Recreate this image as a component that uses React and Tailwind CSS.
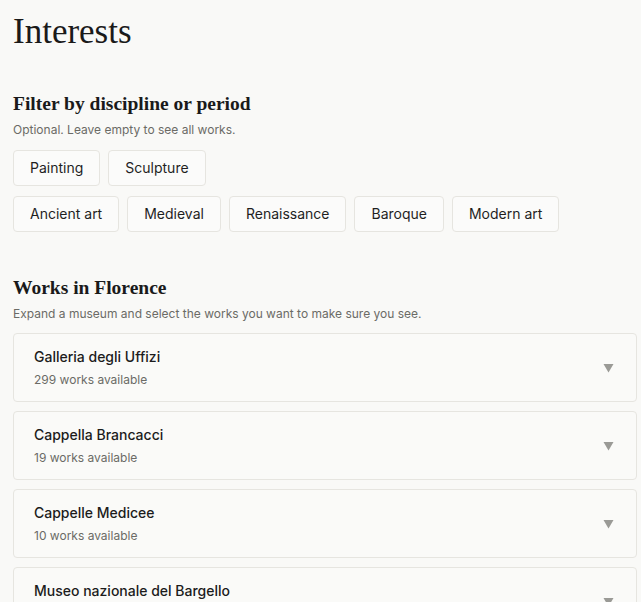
export default function App() {
  const row1 = ["Painting", "Sculpture"];
  const row2 = ["Ancient art", "Medieval", "Renaissance", "Baroque", "Modern art"];
  const museums = [
    ["Galleria degli Uffizi", "299 works available"],
    ["Cappella Brancacci", "19 works available"],
    ["Cappelle Medicee", "10 works available"],
    ["Museo nazionale del Bargello", "52 works available"],
  ];
  const serif = { fontFamily: '"Liberation Serif", serif' };
  const Chip = ({ label }) => (
    <button className="rounded-[4px] border border-[#e6e5e0] bg-[#fbfbfa] px-4 py-[7px] text-[14px] leading-5 text-[#1f1f1f]">
      {label}
    </button>
  );
  return (
    <div className="min-h-screen bg-[#f9f9f7] pl-[13px] pr-[4px] text-[#1c1c1c]" style={{ fontFamily: 'Inter, "Liberation Sans", sans-serif' }}>
      <h1 className="pt-[14px] text-[35px] leading-[36px] font-normal text-[#1a1a1a]" style={serif}>
        Interests
      </h1>
      <section className="mt-[42px]">
        <h2 className="text-[19.5px] leading-6 font-bold text-[#1a1a1a]" style={serif}>
          Filter by discipline or period
        </h2>
        <p className="mt-[6px] text-[12px] leading-4 text-[#6b6b66]">Optional. Leave empty to see all works.</p>
        <div className="mt-[12px] flex flex-col gap-[10px]">
          <div className="flex gap-[8px]">
            {row1.map((l) => (
              <Chip key={l} label={l} />
            ))}
          </div>
          <div className="flex gap-[8px]">
            {row2.map((l) => (
              <Chip key={l} label={l} />
            ))}
          </div>
        </div>
      </section>
      <section className="mt-[44px]">
        <h2 className="text-[19.5px] leading-6 font-bold text-[#1a1a1a]" style={serif}>
          Works in Florence
        </h2>
        <p className="mt-[6px] text-[12px] leading-4 text-[#6b6b66]">
          Expand a museum and select the works you want to make sure you see.
        </p>
        <div className="mt-[11px] flex flex-col gap-[9px]">
          {museums.map(([name, sub]) => (
            <div key={name} className="flex items-center justify-between rounded-[4px] border border-[#e6e5e0] bg-[#fafaf8] pt-[13px] pb-[13px] pl-5 pr-[22px]">
              <div>
                <div className="text-[14px] leading-5 font-medium text-[#1c1c1c]">{name}</div>
                <div className="mt-[5px] text-[12px] leading-4 text-[#6b6b66]">{sub}</div>
              </div>
              <svg width="11" height="10" viewBox="0 0 11 10" className="mt-[1px]">
                <polygon points="0.5,1 10.5,1 5.5,9.5" fill="#9a9a96" />
              </svg>
            </div>
          ))}
        </div>
      </section>
    </div>
  );
}
